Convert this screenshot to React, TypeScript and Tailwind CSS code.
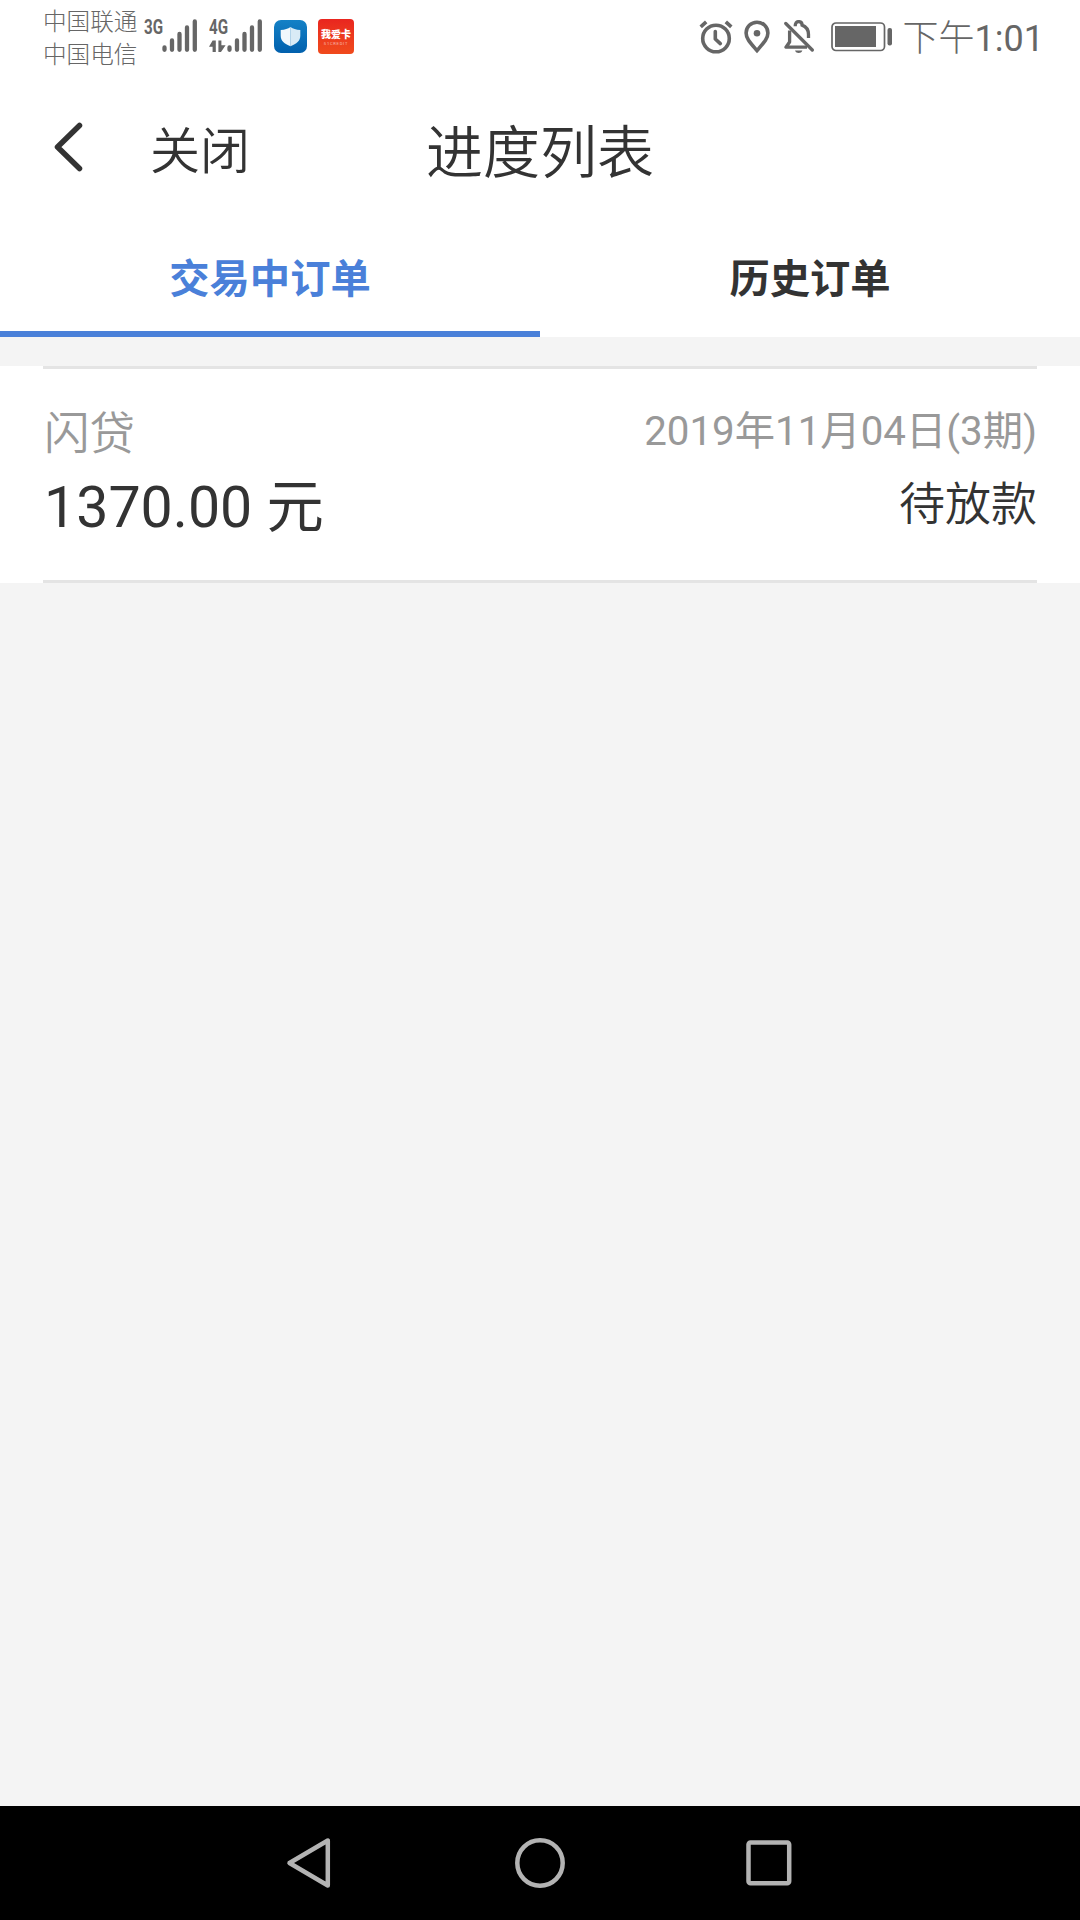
import clsx from "clsx";

// ── Types ────────────────────────────────────────────────────────────────────

interface Order {
  id: string;
  product: string;
  amount: string;
  date: string;
  status: string;
}

const TABS = ["交易中订单", "历史订单"];

const ORDERS: Order[] = [
  {
    id: "1",
    product: "闪贷",
    amount: "1370.00 元",
    date: "2019年11月04日(3期)",
    status: "待放款",
  },
];

// ── Status bar icons ─────────────────────────────────────────────────────────

function SignalBars() {
  return (
    <svg width="36" height="34" viewBox="0 0 36 34" stroke="#666" strokeWidth="4.3" strokeLinecap="round">
      <path d="M2.5 28.5v2.3M10 21.5v9.3M17.5 15v15.8M25 8.5v22.3M32.8 2.5v28.3" />
    </svg>
  );
}

function DataArrows() {
  return (
    <svg width="17" height="13" viewBox="0 0 17 13" fill="#666">
      <path d="M3.6 0.4h3.2V12H3.6V6.8H0z" />
      <path d="M9.4 0.4h3v4.8h4.2L12 12H9.4z" />
    </svg>
  );
}

function ShieldApp() {
  return (
    <svg width="33" height="33" viewBox="0 0 33 33">
      <defs>
        <linearGradient id="shieldBg" x1="0" y1="0" x2="0" y2="1">
          <stop offset="0" stopColor="#1481c6" />
          <stop offset="1" stopColor="#0160ad" />
        </linearGradient>
      </defs>
      <rect width="33" height="33" rx="7" fill="url(#shieldBg)" />
      <path d="M16.5 7c2.6 1.9 5.5 2.7 9.8 2.9v5.8c0 5-3.7 8.2-9.8 10.5z" fill="#d9ebf6" />
      <path d="M16.5 7c-2.6 1.9-5.5 2.7-9.8 2.9v5.8c0 5 3.7 8.2 9.8 10.5z" fill="#f1f8fc" />
    </svg>
  );
}

function CardApp() {
  return (
    <div className="flex h-[35px] w-9 flex-col items-center rounded-[4px] bg-gradient-to-b from-[#e9251f] to-[#f04a1c] pt-[11px] text-white">
      <span className="text-[10px] leading-[10px] font-black whitespace-nowrap">我爱卡</span>
      <span className="mt-[2px] text-[4px] leading-[4px] tracking-[0.8px] whitespace-nowrap opacity-60">51CREDIT</span>
    </div>
  );
}

function AlarmIcon() {
  return (
    <svg width="34" height="34" viewBox="0 0 34 34" fill="none" stroke="#666" strokeWidth="3.6" strokeLinecap="round" strokeLinejoin="round">
      <circle cx="17" cy="18.5" r="13.3" />
      <path d="M16.3 11.5V19l5 4.6" />
      <path d="M1.7 6.8l5.5-5M26.8 1.8l5.5 5" strokeLinecap="butt" />
    </svg>
  );
}

function PinIcon() {
  return (
    <svg width="26" height="34" viewBox="0 0 26 34">
      <path
        d="M13 2.2C7 2.2 2.1 6.9 2.1 12.9c0 5.8 4.6 10.3 10.9 17.6 6.3-7.3 10.9-11.8 10.9-17.6C23.9 6.9 19 2.2 13 2.2z"
        fill="none"
        stroke="#666"
        strokeWidth="3.6"
      />
      <circle cx="13" cy="13.3" r="3.3" fill="#666" />
    </svg>
  );
}

function BellOffIcon() {
  return (
    <svg width="30" height="34" viewBox="0 0 30 34" fill="none" stroke="#666" strokeWidth="3.3">
      <path d="M11.2 6.2c0-3.3 1.3-4.6 3.4-4.6s3.5 1.3 3.5 3.5c4.3 1.6 6.4 4.5 6.4 9.4V18" />
      <path d="M5.6 10.5V22L2 27.2h21" strokeLinejoin="round" />
      <path d="M1.8 3.5L28.3 30" strokeLinecap="round" />
      <path d="M11 30.5h7.4c-.8 1.8-2 2.5-3.7 2.5s-2.9-.7-3.7-2.5z" fill="#666" stroke="none" />
    </svg>
  );
}

function BatteryIcon() {
  return (
    <svg width="63" height="30" viewBox="0 0 63 30">
      <rect x="1" y="1" width="52.5" height="27.5" rx="4" fill="none" stroke="#666" strokeWidth="1.7" />
      <rect x="4" y="4" width="41" height="21" fill="#666" />
      <rect x="56.5" y="6" width="4.5" height="17.5" rx="2" fill="#666" />
    </svg>
  );
}

function StatusBar() {
  return (
    <div className="flex h-[74px] items-start justify-between pr-[36px] pl-[43px] text-[#666]">
      <div className="flex">
        <div className="w-[96px] pt-[6px] text-[23.6px] leading-[33px] font-light whitespace-nowrap">
          <p>中国联通</p>
          <p>中国电信</p>
        </div>
        <span className="mt-[18px] ml-[5px] w-[18px] text-[20px] leading-[18px] font-bold">
          <span className="inline-block origin-left scale-x-[0.76]">3G</span>
        </span>
        <div className="mt-[19px]">
          <SignalBars />
        </div>
        <div className="mt-[18px] ml-[11px] flex w-[18px] flex-col">
          <span className="origin-left scale-x-[0.76] text-[20px] leading-[18px] font-bold">4G</span>
          <span className="mt-[4px]">
            <DataArrows />
          </span>
        </div>
        <div className="mt-[19px]">
          <SignalBars />
        </div>
        <div className="mt-5 ml-[11px]">
          <ShieldApp />
        </div>
        <div className="mt-[19px] ml-[11px]">
          <CardApp />
        </div>
      </div>
      <div className="flex">
        <div className="mt-5 flex gap-[11.5px]">
          <AlarmIcon />
          <PinIcon />
          <span className="ml-[2px]">
            <BellOffIcon />
          </span>
        </div>
        <div className="mt-[22px] ml-[17px]">
          <BatteryIcon />
        </div>
        <span className="mt-[21px] ml-[9px] text-[36px] leading-[36px] whitespace-nowrap">
          <span className="font-light">下午</span>1:01
        </span>
      </div>
    </div>
  );
}

// ── Title + tabs ─────────────────────────────────────────────────────────────

function TitleBar() {
  return (
    <header className="grid h-[151px] grid-cols-[1fr_auto_1fr] items-start font-[350] text-[#333]">
      <div className="flex items-start pl-[52px]">
        <svg className="mt-[47px]" width="32" height="52" viewBox="0 0 32 52" fill="none" stroke="#333" strokeWidth="5.5" strokeLinecap="round">
          <path d="M27.5 4.5L5.5 26l22 21.5" strokeLinejoin="round" />
        </svg>
        <span className="mt-[53px] ml-[66px] text-[50px] leading-[50px] whitespace-nowrap">关闭</span>
      </div>
      <h1 className="mt-[50px] text-[57px] leading-[60px] whitespace-nowrap">进度列表</h1>
    </header>
  );
}

function Tabs({ active }: { active: number }) {
  return (
    <nav className="grid h-[112px] grid-cols-2">
      {TABS.map((t, i) => (
        <button
          key={t}
          className={clsx(
            "border-b-[6px] pt-[4px] text-[40.3px] leading-none font-bold",
            i === active ? "border-[#4a80d9] text-[#4a80d9]" : "border-transparent text-[#333]"
          )}
        >
          {t}
        </button>
      ))}
    </nav>
  );
}

// ── Order row ────────────────────────────────────────────────────────────────

function OrderRow({ order }: { order: Order }) {
  return (
    <div className="bg-white px-[43px]">
      <div className="flex h-[217px] justify-between border-y-[3px] border-[#e4e4e4] whitespace-nowrap">
        <div className="flex flex-col pl-px">
          <span className="mt-[41px] text-[45.5px] leading-[50px] font-[350] text-[#999]">{order.product}</span>
          <span className="mt-[18px] text-[57.3px] leading-[60px] text-[#333]">{order.amount}</span>
        </div>
        <div className="flex flex-col items-end">
          <span className="mt-[39px] text-[40.3px] leading-[48px] text-[#999]">{order.date}</span>
          <span className="mt-[23px] text-[46px] leading-[50px] font-[350] text-[#333]">{order.status}</span>
        </div>
      </div>
    </div>
  );
}

// ── Android navigation ───────────────────────────────────────────────────────

function NavBar() {
  return (
    <div className="flex h-[114px] items-center justify-center gap-[180px] bg-black">
      <svg width="50" height="52" viewBox="0 0 50 52" fill="none" stroke="#b3b3b3" strokeWidth="4.5" strokeLinejoin="round">
        <path d="M43.8 3.5v45L5.5 26z" />
      </svg>
      <svg width="52" height="52" viewBox="0 0 52 52" fill="none" stroke="#b3b3b3" strokeWidth="4.5">
        <circle cx="26" cy="26" r="22.7" />
      </svg>
      <svg width="50" height="52" viewBox="0 0 50 52" fill="none" stroke="#b3b3b3" strokeWidth="4.5">
        <rect x="2.5" y="5.5" width="40.7" height="40.7" rx="2" />
      </svg>
    </div>
  );
}

export default function App() {
  return (
    <div lang="zh-CN" className="flex h-[1920px] w-[1080px] flex-col overflow-hidden bg-[#f4f4f4] font-[Roboto,'Noto_Sans_CJK_SC',sans-serif]">
      <div className="bg-white">
        <StatusBar />
        <TitleBar />
        <Tabs active={0} />
      </div>
      <main className="flex-1 pt-[29px]">
        {ORDERS.map((o) => (
          <OrderRow key={o.id} order={o} />
        ))}
      </main>
      <NavBar />
    </div>
  );
}
